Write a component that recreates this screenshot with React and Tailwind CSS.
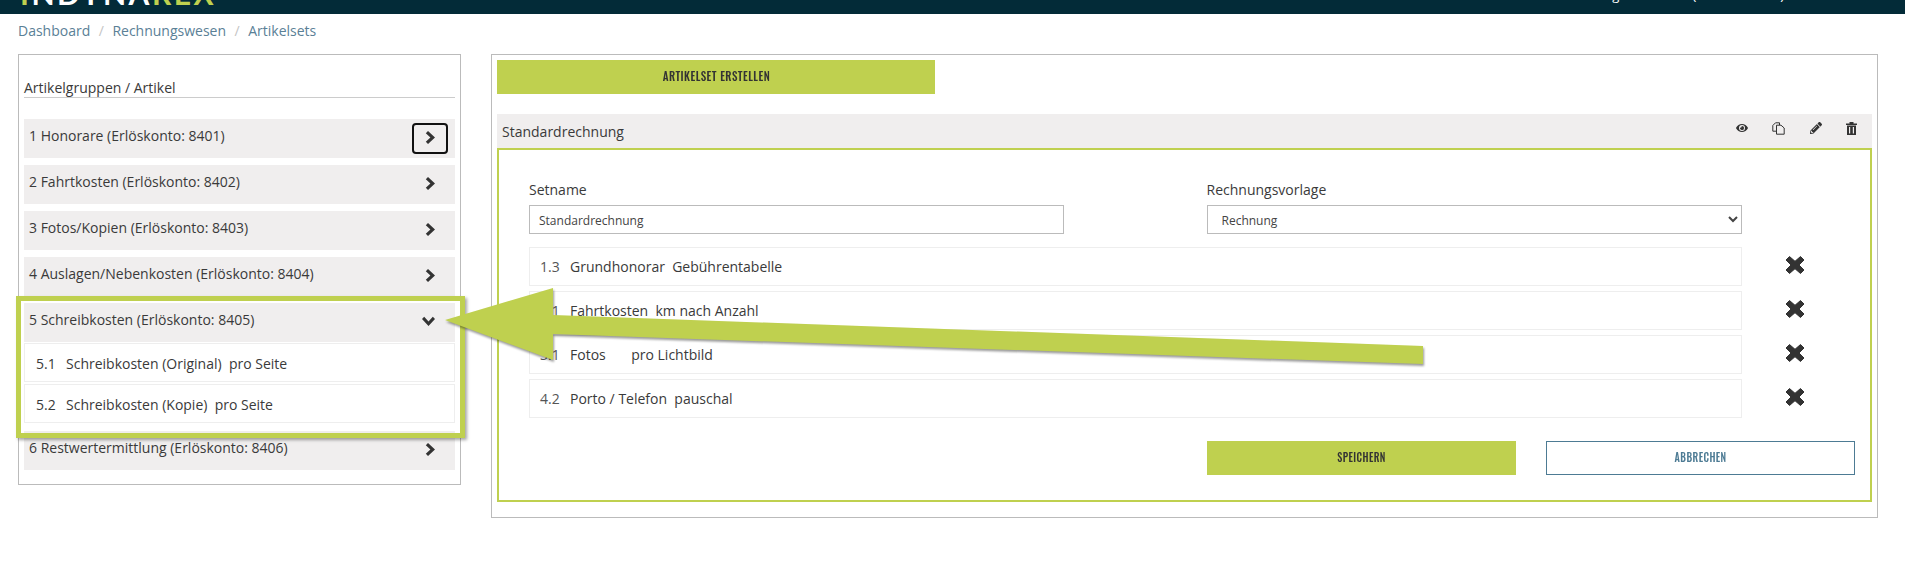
import React from 'react';
import { FaEye, FaPencilAlt } from 'react-icons/fa';

const GROUPS = [
  '1 Honorare (Erlöskonto: 8401)',
  '2 Fahrtkosten (Erlöskonto: 8402)',
  '3 Fotos/Kopien (Erlöskonto: 8403)',
  '4 Auslagen/Nebenkosten (Erlöskonto: 8404)',
];

const SET_ITEMS = [
  ['1.3', 'Grundhonorar  Gebührentabelle'],
  ['2.1', 'Fahrtkosten  km nach Anzahl'],
  ['3.1', 'Fotos       pro Lichtbild'],
  ['4.2', 'Porto / Telefon  pauschal'],
];

function ChevronRight() {
  return (
    <svg width="11" height="13" viewBox="0 0 11 13" fill="#333">
      <path d="M3 0 L10 6.5 L3 13 L0.8 10.8 L5.4 6.5 L0.8 2.2Z" />
    </svg>
  );
}

function ChevronDown() {
  return (
    <svg width="13" height="11" viewBox="0 0 13 11" fill="#333">
      <path d="M0 3 L2.2 0.8 L6.5 5.4 L10.8 0.8 L13 3 L6.5 10Z" />
    </svg>
  );
}

function RemoveIcon() {
  return (
    <svg width="20" height="20" viewBox="0 0 20 19" fill="#333" stroke="#333" strokeWidth="1" strokeLinejoin="round">
      <path d="M4.5 1 L10 5.8 L15.5 1 L19 4.5 L14 9.5 L19 14.5 L15.5 18 L10 13.2 L4.5 18 L1 14.5 L6 9.5 L1 4.5Z" />
    </svg>
  );
}

function DuplicateIcon() {
  return (
    <svg width="13" height="13" viewBox="0 0 13 13" fill="none" stroke="#333" strokeWidth="1">
      <path d="M7.5 3 V0.8 H3.5 L0.8 3.5 V9.2 H4.5" />
      <path d="M4.5 3.2 H9 L12.2 6 V12.2 H4.5Z" fill="#f0eeee" />
    </svg>
  );
}

function TrashIcon() {
  return (
    <svg width="11" height="13" viewBox="0 0 11 13" fill="#333">
      <path d="M3.5 0 H7.5 V1.5 H11 V3 H0 V1.5 H3.5Z" />
      <path d="M1 3.5 H10 V13 H1Z M3 5 V11.5 H4.2 V5Z M6.8 5 V11.5 H8 V5Z" fillRule="evenodd" />
    </svg>
  );
}

function GroupRow({ label, open, focused }) {
  return (
    <div className="h-[39px] bg-[#f0eeee] flex items-center justify-between pl-[5px] pr-[7px] mb-[7px] text-[14px] text-[#3a3a3a]">
      <span className="-mt-[6px]">{label}</span>
      <span className={`w-[36px] h-[31px] pb-[2px] flex items-center justify-center rounded-[4px] ${focused ? 'border-2 border-[#111]' : ''} ${open ? 'pr-[3px]' : ''}`}>
        {open ? <ChevronDown /> : <ChevronRight />}
      </span>
    </div>
  );
}

export default function App() {
  return (
    <div className="relative h-[580px] overflow-hidden bg-white font-['Open_Sans',sans-serif] text-[#3a3a3a]">
      <header className="h-[14px] bg-[#032b38] overflow-hidden flex justify-between items-start">
        <div className="pl-[20px] leading-[30px] text-[30px] font-bold tracking-[2.5px] font-['Lato',sans-serif] text-white -translate-y-[22px] whitespace-nowrap">
          <span className="text-[#bfd04f]">I</span>NDYNA<span className="text-[#bfd04f]">REX</span>
        </div>
        <div className="pr-[121px] text-white text-[13px] leading-[14px] -translate-y-[12px] whitespace-nowrap">Angemeldet als (Administrator)</div>
      </header>

      <nav className="h-[32px] mb-[8px] pl-[18px] flex items-center text-[14px] text-[#5a8096]">
        <span>Dashboard</span>
        <span className="mx-[8.5px] text-[#c4c4c4]">/</span>
        <span>Rechnungswesen</span>
        <span className="mx-[8.5px] text-[#c4c4c4]">/</span>
        <span>Artikelsets</span>
      </nav>

      <div className="flex items-start pl-[18px] pr-[27px] gap-[30px]">
        <aside className="w-[443px] h-[431px] border border-[#bbb] px-[5px] shrink-0">
          <div className="mt-[22px] h-[21px] border-b border-[#ccc] text-[14px] leading-[22px]">Artikelgruppen / Artikel</div>
          <div className="mt-[21px]">
            {GROUPS.map((g, i) => <GroupRow key={g} label={g} focused={i === 0} />)}
            <GroupRow label="5 Schreibkosten (Erlöskonto: 8405)" open />
            <div className="-mt-[6px] mb-[8px] flex flex-col gap-[2px]">
              <div className="h-[39px] pt-[2px] border border-[#eee] flex items-center pl-[11px] text-[14px]">
                <span className="w-[30px]">5.1</span>Schreibkosten (Original)&nbsp; pro Seite
              </div>
              <div className="h-[39px] pt-[2px] border border-[#eee] flex items-center pl-[11px] text-[14px]">
                <span className="w-[30px]">5.2</span>Schreibkosten (Kopie)&nbsp; pro Seite
              </div>
            </div>
            <GroupRow label="6 Restwertermittlung (Erlöskonto: 8406)" />
          </div>
        </aside>

        <main className="flex-1 h-[464px] border border-[#bbb] px-[5px] pt-[5px]">
          <button className="w-[438px] h-[34px] pb-[2px] bg-[#bfd04f] block text-center font-['Oswald','Liberation_Sans_Narrow',sans-serif] text-[12px] tracking-[0.5px] text-[#333] font-medium">
            <span className="inline-block scale-x-[0.92]">ARTIKELSET ERSTELLEN</span>
          </button>
          <div className="mt-[20px] h-[34px] bg-[#f0eeee] flex items-center justify-between pl-[5px] pr-[15px] text-[14px]">
            <span>Standardrechnung</span>
            <div className="flex items-center gap-[24.5px] text-[#333] text-[12px] -mt-[6px]">
              <FaEye />
              <DuplicateIcon />
              <FaPencilAlt />
              <TrashIcon />
            </div>
          </div>
          <div className="h-[354px] border-2 border-[#bfd04f] pt-[30px] pl-[30px] pr-[15px]">
            <div className="flex gap-[143px] w-[1213px]">
              <label className="w-[535px] block">
                <span className="block text-[14px] leading-[20px] mb-[5px]">Setname</span>
                <input readOnly value="Standardrechnung" className="w-full h-[29px] pt-[2px] border border-[#bbb] px-[9px] text-[12px] text-[#444]" />
              </label>
              <label className="w-[536px] block">
                <span className="block text-[14px] leading-[20px] mb-[5px]">Rechnungsvorlage</span>
                <select className="w-full h-[29px] pt-[2px] border border-[#bbb] px-[10px] text-[12px] text-[#444] bg-white">
                  <option>Rechnung</option>
                </select>
              </label>
            </div>
            <div className="mt-[13px] flex flex-col gap-[5px]">
              {SET_ITEMS.map(([nr, text]) => (
                <div key={nr} className="flex items-center">
                  <div className="w-[1213px] h-[39px] border border-[#eee] flex items-center pl-[10px] text-[14px] whitespace-pre">
                    <span className="w-[30px] text-[#555]">{nr}</span>{text}
                  </div>
                  <span className="ml-[43px] pb-[3px]"><RemoveIcon /></span>
                </div>
              ))}
            </div>
            <div className="mt-[23px] flex justify-end gap-[30px] font-['Oswald','Liberation_Sans_Narrow',sans-serif] text-[12px] tracking-[0.5px] font-medium">
              <button className="w-[309px] h-[34px] pb-[2px] bg-[#bfd04f] text-[#333]"><span className="inline-block scale-x-[0.85]">SPEICHERN</span></button>
              <button className="w-[309px] h-[34px] pb-[2px] border border-[#4d7b94] text-[#4d7b94]"><span className="inline-block scale-x-[0.85]">ABBRECHEN</span></button>
            </div>
          </div>
        </main>
      </div>

      {/* annotation: highlight box and arrow drawn over the page */}
      <div className="absolute left-[16px] top-[296px] w-[449px] h-[142px] border-[5px] border-[#bfd04f] shadow-[2px_2px_3px_rgba(0,0,0,0.35)] pointer-events-none" />
      <svg className="absolute left-0 top-0 pointer-events-none" width="1905" height="580">
        <polygon points="445,320 553,288 553,315 1423,346 1423,364 553,334 553,360" fill="#bfd04f" style={{ filter: 'drop-shadow(1px 2px 1px rgba(0,0,0,0.4))' }} />
      </svg>
    </div>
  );
}
